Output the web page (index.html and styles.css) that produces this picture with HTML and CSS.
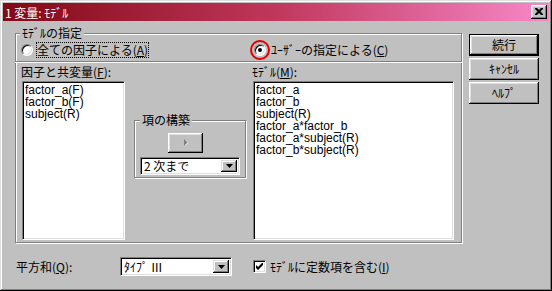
FILE: index.html
```html
<!DOCTYPE html>
<html lang="ja">
<head>
<meta charset="utf-8">
<title>1 変量: ﾓﾃﾞﾙ</title>
<link rel="stylesheet" href="styles.css">
</head>
<body>
<div class="window">
  <div class="titlebar">
    <span class="title">1 変量: ﾓﾃﾞﾙ</span>
    <span class="close"><svg width="8" height="7" viewBox="0 0 8 7"><path d="M0 0h2l2 2 2-2h2v1l-2.5 2.5 2.5 2.5v1h-2l-2-2-2 2h-2v-1l2.5-2.5-2.5-2.5z"/></svg></span>
  </div>
  <div class="body">
    <div class="main">
      <div class="group spec">
        <div class="legend">ﾓﾃﾞﾙの指定</div>
        <div class="radios">
          <div class="radio-item all"><span class="radio"></span><span class="focus">全ての因子による(<u>A</u>)</span></div>
          <div class="radio-item user"><span class="ring"><span class="radio on"></span></span><span class="rtext">ﾕｰｻﾞｰの指定による(<u>C</u>)</span></div>
        </div>
        <div class="lists">
          <div class="col left">
            <div class="lbl">因子と共変量(<u>F</u>):</div>
            <ul class="listbox narrow">
              <li>factor_a(F)</li>
              <li>factor_b(F)</li>
              <li>subject(R)</li>
            </ul>
          </div>
          <div class="group build">
            <div class="legend">項の構築</div>
            <div class="arrow-btn"><svg width="4" height="8" viewBox="0 0 4 8"><path d="M1 1v6l3-3z" fill="#fff"/><path d="M0 0v7l3.5-3.5z" fill="#808080"/></svg></div>
            <div class="combo small">
              <span class="combo-text">2 次まで</span>
              <span class="drop"><svg width="7" height="4" viewBox="0 0 7 4"><path d="M0 0h7l-3.5 4z"/></svg></span>
            </div>
          </div>
          <div class="col right">
            <div class="lbl">ﾓﾃﾞﾙ(<u>M</u>):</div>
            <ul class="listbox wide">
              <li>factor_a</li>
              <li>factor_b</li>
              <li>subject(R)</li>
              <li>factor_a*factor_b</li>
              <li>factor_a*subject(R)</li>
              <li>factor_b*subject(R)</li>
            </ul>
          </div>
        </div>
      </div>
      <div class="bottom">
        <span class="sumlbl">平方和(<u>Q</u>):</span>
        <div class="combo type">
          <span class="combo-text">ﾀｲﾌﾟ Ⅲ</span>
          <span class="drop"><svg width="7" height="4" viewBox="0 0 7 4"><path d="M0 0h7l-3.5 4z"/></svg></span>
        </div>
        <div class="check-item">
          <span class="check"><svg width="7" height="7" viewBox="0 0 7 7"><path d="M0 2v3l2 2 5-5v-3l-5 5z"/></svg></span>
          <span>ﾓﾃﾞﾙに定数項を含む(<u>I</u>)</span>
        </div>
      </div>
    </div>
    <div class="buttons">
      <div class="btn default"><span>続行</span></div>
      <div class="btn"><span>ｷｬﾝｾﾙ</span></div>
      <div class="btn"><span>ﾍﾙﾌﾟ</span></div>
    </div>
  </div>
</div>
</body>
</html>
```
FILE: styles.css
```css
* { box-sizing: border-box; }
html, body { margin: 0; padding: 0; background: #c0c0c0; }
body {
  font-family: "Noto Sans CJK JP", "Liberation Sans", sans-serif;
  font-size: 12px;
  line-height: 12px;
  color: #000;
}
u { text-decoration: underline; text-underline-offset: 1px; }

.window {
  width: 552px;
  height: 291px;
  padding: 3px;
  background: #c0c0c0;
  box-shadow: inset -1px -1px #000, inset 1px 1px #dfdfdf, inset -2px -2px #808080, inset 2px 2px #fff;
  display: flex;
  flex-direction: column;
}

.titlebar {
  height: 18px;
  display: flex;
  align-items: center;
  padding: 0 2px 0 2px;
  background: linear-gradient(to right, #820814 0%, #c0375c 50%, #f888c8 100%);
  color: #fff;
}
.title { flex: 1; font-size: 12px; padding-top: 1px; }
.close {
  width: 16px;
  height: 14px;
  display: flex;
  align-items: center;
  justify-content: center;
  background: #c0c0c0;
  box-shadow: inset -1px -1px #000, inset 1px 1px #fff, inset -2px -2px #808080, inset 2px 2px #dfdfdf;
  padding-bottom: 1px;
}

.body {
  flex: 1;
  display: flex;
  padding: 12px 0 0 12px;
}
.main { width: 448px; display: flex; flex-direction: column; }

.group {
  border: 1px solid #808080;
  box-shadow: inset 1px 1px #fff, 1px 1px #fff;
}
.legend {
  width: fit-content;
  background: #c0c0c0;
  padding: 0 2px;
  margin-top: -7px;
  margin-left: 4px;
  height: 12px;
}

.spec { width: 447px; height: 210px; display: flex; flex-direction: column; }

.radios {
  height: 23px;
  margin: 0 -1px;
  display: flex;
  align-items: center;
  padding-left: 6px;
  border-bottom: 1px solid #808080;
  box-shadow: 0 1px #fff;
}
.radio-item { display: flex; align-items: center; }
.all { width: 233px; }
.radio {
  width: 12px;
  height: 12px;
  border-radius: 50%;
  background: #fff;
  border: 1px solid;
  border-color: #808080 #fff #fff #808080;
  box-shadow: inset 1px 1px #000, inset -1px -1px #dfdfdf;
  display: flex;
  align-items: center;
  justify-content: center;
}
.radio.on::after {
  content: "";
  width: 4px;
  height: 4px;
  border-radius: 50%;
  background: #000;
}
.focus {
  margin-left: 3px;
  padding: 2px 1px;
  outline: 1px dotted #000;
  outline-offset: -1px;
}
.ring {
  width: 20px;
  height: 20px;
  margin: -4px -2px -4px -4px;
  border: 2px solid #e00000;
  border-radius: 50%;
  display: flex;
  align-items: center;
  justify-content: center;
}
.rtext { margin-left: 3px; }

.lists { flex: 1; display: flex; padding-top: 4px; }
.col { display: flex; flex-direction: column; }
.left { padding-left: 6px; }
.lbl { margin-left: -1px; height: 12px; margin-bottom: 3px; }
.listbox {
  list-style: none;
  margin: 0;
  padding: 2px 2px;
  background: #fff;
  border: 1px solid;
  border-color: #808080 #fff #fff #808080;
  box-shadow: inset 1px 1px #000, inset -1px -1px #dfdfdf;
  font-family: "Liberation Sans", sans-serif;
  height: 159px;
}
.listbox li { height: 12px; line-height: 12px; white-space: nowrap; }
.narrow { width: 103px; }
.wide { width: 201px; }

.build {
  width: 112px;
  height: 58px;
  margin: 54px 7px 0 9px;
  display: flex;
  flex-direction: column;
}
.build .legend { margin-left: 5px; }
.arrow-btn {
  width: 35px;
  height: 20px;
  margin: 7px 0 0 33px;
  display: flex;
  align-items: center;
  justify-content: center;
  box-shadow: inset -1px -1px #000, inset 1px 1px #fff, inset -2px -2px #808080, inset 2px 2px #dfdfdf;
}

.combo {
  display: flex;
  align-items: center;
  background: #fff;
  border: 1px solid;
  border-color: #808080 #fff #fff #808080;
  box-shadow: inset 1px 1px #000, inset -1px -1px #dfdfdf;
  padding: 2px;
}
.combo-text { flex: 1; padding-left: 1px; }
.drop {
  width: 16px;
  height: 100%;
  background: #c0c0c0;
  box-shadow: inset -1px -1px #000, inset 1px 1px #dfdfdf, inset -2px -2px #808080, inset 2px 2px #fff;
  display: flex;
  align-items: center;
  justify-content: center;
}
.small { width: 100px; height: 18px; margin: 4px 0 0 5px; }

.bottom {
  flex: 1;
  display: flex;
  align-items: center;
  padding-top: 2px;
}
.sumlbl { margin-left: 1px; width: 104px; }
.type { width: 112px; height: 19px; }
.check-item { display: flex; align-items: center; margin-left: 21px; }
.check {
  width: 13px;
  height: 13px;
  background: #fff;
  border: 1px solid;
  border-color: #808080 #fff #fff #808080;
  box-shadow: inset 1px 1px #000, inset -1px -1px #dfdfdf;
  display: flex;
  align-items: center;
  justify-content: center;
  margin-right: 4px;
}

.buttons {
  margin-left: 6px;
  padding-top: 1px;
  display: flex;
  flex-direction: column;
  gap: 2px;
}
.btn {
  width: 70px;
  height: 22px;
  display: flex;
  align-items: center;
  justify-content: center;
  box-shadow: inset -1px -1px #000, inset 1px 1px #fff, inset -2px -2px #808080, inset 2px 2px #dfdfdf;
}
.btn.default {
  border: 1px solid #000;
}
.buttons .btn + .btn { margin-top: 0; }
```
